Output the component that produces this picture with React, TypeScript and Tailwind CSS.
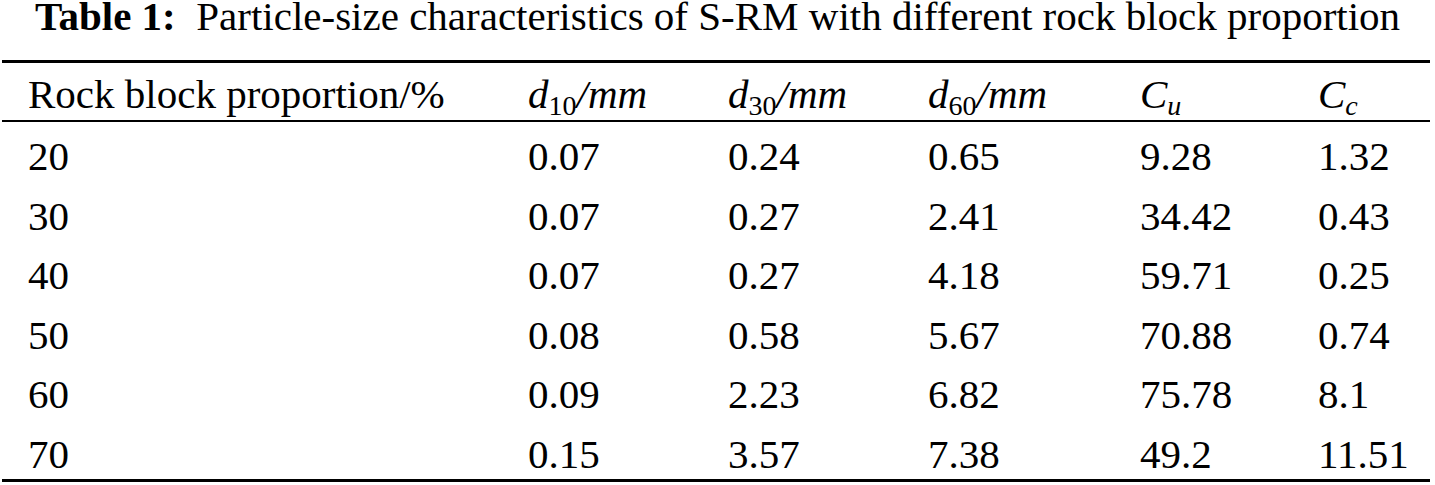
const rows = [
  ["20", "0.07", "0.24", "0.65", "9.28", "1.32"],
  ["30", "0.07", "0.27", "2.41", "34.42", "0.43"],
  ["40", "0.07", "0.27", "4.18", "59.71", "0.25"],
  ["50", "0.08", "0.58", "5.67", "70.88", "0.74"],
  ["60", "0.09", "2.23", "6.82", "75.78", "8.1"],
  ["70", "0.15", "3.57", "7.38", "49.2", "11.51"],
];

// column starts: 28, 528, 728, 928, 1140, 1318
const cols = "grid grid-cols-[500px_200px_200px_212px_178px_1fr] pl-[26px]";

function D({ n }: { n: string }) {
  return (
    <span>
      <i>d</i>
      <sub className="text-[28px] not-italic">{n}</sub>
      <i>/mm</i>
    </span>
  );
}

function C({ s }: { s: string }) {
  return (
    <span>
      <i>C</i>
      <sub className="text-[28px] italic">{s}</sub>
    </span>
  );
}

export default function App() {
  return (
    <div className="w-[1435px] h-[485px] bg-white text-black font-['Liberation_Serif',serif] text-[41px] overflow-hidden">
      <p className="h-[60px] leading-[32px] text-center whitespace-pre">
        <b>Table 1:</b>  Particle-size characteristics of S-RM with different rock block proportion
      </p>
      <div className="ml-[2px] w-[1428px] border-t-[3px] border-b-[3px] border-black">
        <div className={`${cols} h-[59px] pt-[6px] leading-[51px] border-b-[2px] border-black`}>
          <span>Rock block proportion/%</span>
          <D n="10" />
          <D n="30" />
          <D n="60" />
          <C s="u" />
          <C s="c" />
        </div>
        <div className="h-[357px] pt-[5px]">
          {rows.map((r) => (
            <div key={r[0]} className={`${cols} leading-[59.6px]`}>
              {r.map((v, i) => (
                <span key={i}>{v}</span>
              ))}
            </div>
          ))}
        </div>
      </div>
    </div>
  );
}
